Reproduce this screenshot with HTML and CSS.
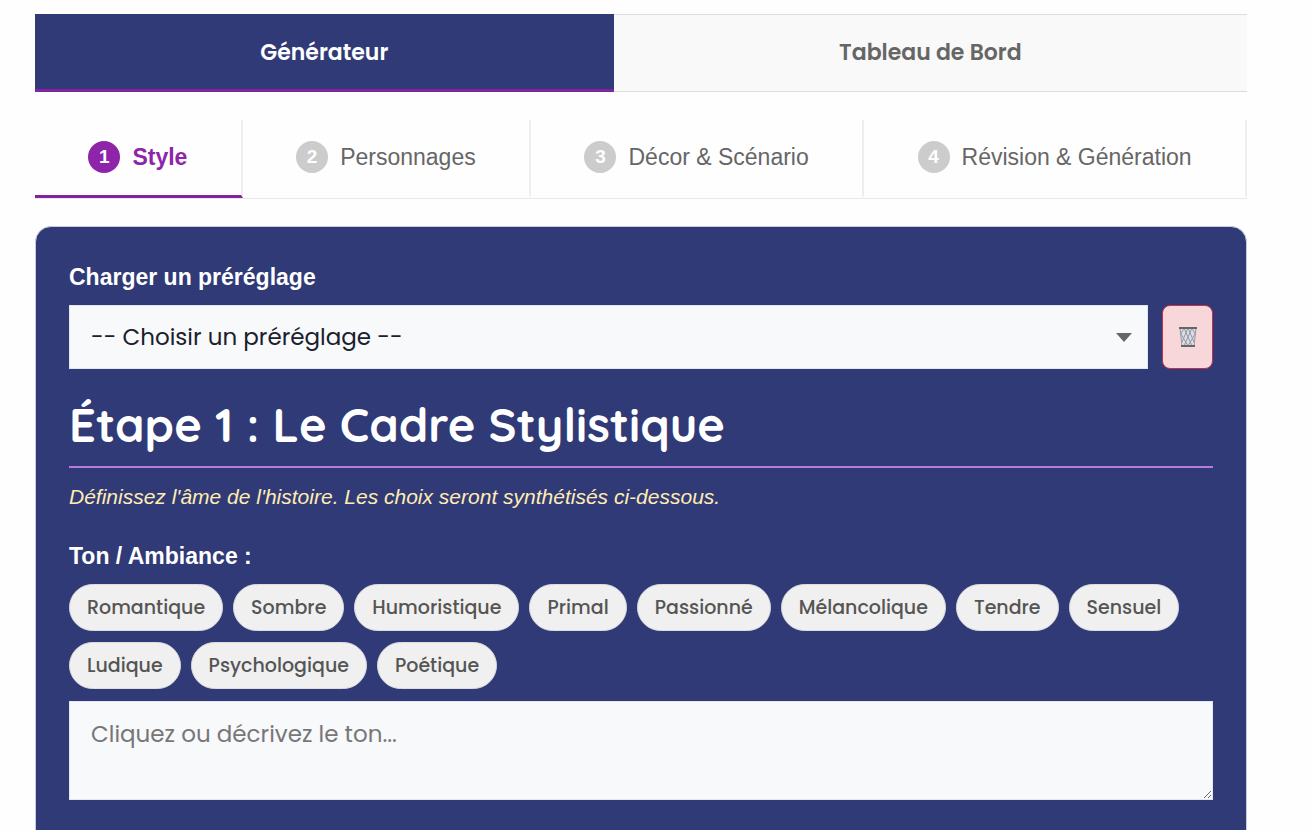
FILE: index.html
```
<!DOCTYPE html>
<html lang="fr">
<head>
<meta charset="UTF-8">
<meta name="viewport" content="width=device-width, initial-scale=1">
<title>Générateur d'histoires</title>
<link rel="stylesheet" href="styles.css">
</head>
<body>

  <main class="container">
    <nav class="tabs">
      <button type="button" class="tab active">Générateur</button>
      <button type="button" class="tab">Tableau de Bord</button>
    </nav>

    <nav class="steps">
      <button type="button" class="step active"><span class="num">1</span>Style</button>
      <button type="button" class="step"><span class="num">2</span>Personnages</button>
      <button type="button" class="step"><span class="num">3</span>Décor &amp; Scénario</button>
      <button type="button" class="step"><span class="num">4</span>Révision &amp; Génération</button>
    </nav>

    <form class="card">
      <label class="label" for="preset">Charger un préréglage</label>
      <div class="preset">
        <div class="select">
          <select id="preset">
            <option>-- Choisir un préréglage --</option>
          </select>
        </div>
        <button type="button" class="delete" aria-label="Supprimer le préréglage">
          <svg width="20" height="22" viewBox="0 0 20 22" fill="none">
            <path d="M2 2l2 18h12l2-18z" fill="#dddfe6"/>
            <path d="M2 2l2 18M18 2l-2 18M6 2l8 18M14 2L6 20M10 2l6 14M10 2L4 16M3 8l7 12M17 8l-7 12M3 8l3-6M17 8l-3-6" stroke="#9598a2"/>
            <path d="M1 2h18M3 20h14" stroke="#666" stroke-width="2"/>
          </svg>
        </button>
      </div>

      <h1>Étape 1 : Le Cadre Stylistique</h1>
      <p class="hint">Définissez l'âme de l'histoire. Les choix seront synthétisés ci-dessous.</p>

      <label class="label" for="tone">Ton / Ambiance :</label>
      <div class="chips">
        <button type="button">Romantique</button>
        <button type="button">Sombre</button>
        <button type="button">Humoristique</button>
        <button type="button">Primal</button>
        <button type="button">Passionné</button>
        <button type="button">Mélancolique</button>
        <button type="button">Tendre</button>
        <button type="button">Sensuel</button>
        <button type="button">Ludique</button>
        <button type="button">Psychologique</button>
        <button type="button">Poétique</button>
      </div>
      <textarea id="tone" placeholder="Cliquez ou décrivez le ton..."></textarea>
    </form>
  </main>

</body>
</html>
```
FILE: styles.css
```
* { box-sizing: border-box; }
body { margin: 0; background: #fefefe; color: #666; font-family: Arial, "Liberation Sans", sans-serif; font-size: 23px; }
button, select, textarea { font-family: Poppins, Inter, sans-serif; margin: 0; }
button { cursor: pointer; }

.container { padding: 14px 64px 0 35px; }

.tabs { display: flex; margin-bottom: 28px; }
.tab { flex: 1 1 auto; height: 78px; padding: 0 16px 2px; background: #f9f9f9; border: solid #ddd; border-width: 1px 0; color: #666; font-size: 22px; font-weight: 600; }
.tab.active { background: #303a76; border-top-color: #303a76; border-bottom: 3px solid #8223a0; padding-bottom: 0; color: #fff; }

.steps { display: flex; border-bottom: 1px solid #e8e8e8; }
.step { flex: 1 1 auto; display: flex; align-items: center; justify-content: center; gap: 12px; height: 78px; padding: 0 0 1px; background: none; border: 0; border-right: 2px solid #eee; border-bottom: 3px solid transparent; color: #666; font-family: inherit; font-size: 23px; }
.step.active { color: #8e24aa; border-bottom-color: #8223a0; font-weight: bold; }
.num { display: flex; align-items: center; justify-content: center; width: 32px; height: 32px; border-radius: 50%; background: #ccc; color: #fff; font-size: 19px; font-weight: bold; }
.active .num { background: #8e24aa; }

.card { margin-top: 27px; padding: 36px 33px; background: #303a76; border: 1px solid #c5cbe0; border-radius: 16px; color: #fff; }
.label { display: block; margin-bottom: 14px; font-weight: bold; line-height: 28px; }

.preset { display: flex; gap: 14px; }
.select { position: relative; flex: 1; }
.select::after { content: ""; position: absolute; right: 16px; top: 28px; border: 8px solid transparent; border-top: 9px solid #666; border-bottom: 0; pointer-events: none; }
select { appearance: none; display: block; width: 100%; height: 64px; padding: 0 21px; background: #f7f9fb; border: 1px solid #e2e6ee; border-radius: 0; color: #1a202c; font-size: 23px; }
.delete { display: flex; align-items: center; justify-content: center; width: 51px; height: 64px; padding: 0; background: #f8d7da; border: 1px solid #c0304a; border-radius: 8px; }

h1 { margin: 20px 0 14px; padding-bottom: 6px; border-bottom: 2px solid #b57be0; font-family: Quicksand, Lato, sans-serif; font-size: 47px; line-height: 71px; font-weight: 700; }
.hint { margin: 0 0 30px; color: #ffecb3; font-size: 21px; font-style: italic; line-height: 30px; }

.chips { display: flex; flex-wrap: wrap; gap: 11px 10px; margin-bottom: 12px; }
.chips button { height: 47px; padding: 0 17px; background: #f0f0f0; border: 1px solid #ddd; border-radius: 24px; color: #555; font-size: 19px; font-weight: 500; }

textarea { display: block; width: 100%; height: 99px; margin-bottom: 30px; padding: 16px 21px; background: #f7f9fb; border: 1px solid #e2e6ee; border-radius: 0; color: #1a202c; font-size: 23px; line-height: 32px; resize: vertical; }
textarea::placeholder { color: #777; }
```
